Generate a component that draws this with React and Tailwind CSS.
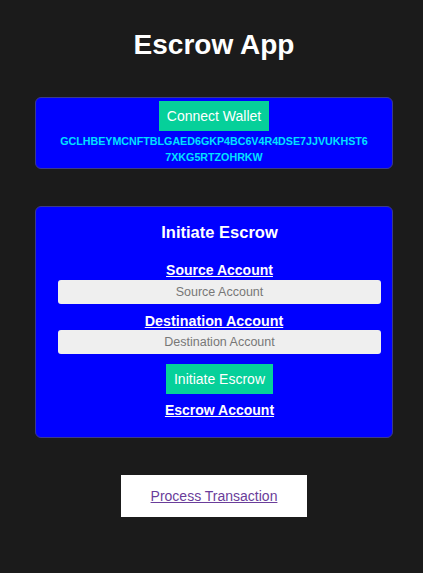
export default function App() {
  return (
    <div className="min-h-[573px] bg-[#1b1b1b] font-['Liberation_Sans',Arial,sans-serif] pt-[29px] pb-10">
      <div className="ml-[35px] w-[358px] flex flex-col">
        <h1 className="text-center text-white font-bold text-[28px] leading-[32px]">Escrow App</h1>

        <div className="mt-[36px] bg-[#0000ff] rounded-[6px] border border-[#3b3b8a] pt-[3px] pb-[3px] flex flex-col items-center">
          <button className="bg-[#06d09a] text-white text-[14px] h-[30px] px-[8px]">Connect Wallet</button>
          <p className="mt-[2px] text-[#00e0ff] font-bold text-[10.7px] leading-[16px] text-center px-[22px] break-all">
            GCLHBEYMCNFTBLGAED6GKP4BC6V4R4DSE7JJVUKHST67XKG5RTZOHRKW
          </p>
        </div>

        <div className="mt-[37px] bg-[#0000ff] rounded-[6px] border border-[#3b3b8a] pt-[15px] pb-[19px] pl-[22px] pr-[11px] flex flex-col items-center">
          <h2 className="text-white font-bold text-[16.5px] leading-[20px]">Initiate Escrow</h2>
          <label className="mt-[20px] text-white font-bold underline text-[14px] leading-[16px]">Source Account</label>
          <input
            placeholder="Source Account"
            className="mt-[2px] w-full h-[24px] rounded-[3px] bg-[#efefef] text-center text-[12.5px] placeholder:text-[#777]"
          />
          <label className="mt-[9px] mr-[11px] text-white font-bold underline text-[14.3px] leading-[16px]">Destination Account</label>
          <input
            placeholder="Destination Account"
            className="mt-[1px] w-full h-[24px] rounded-[3px] bg-[#efefef] text-center text-[12.5px] placeholder:text-[#777]"
          />
          <button className="mt-[10px] bg-[#06d09a] text-white text-[14px] h-[30px] px-[8px]">Initiate Escrow</button>
          <span className="mt-[8px] text-white font-bold underline text-[14px] leading-[16px]">Escrow Account</span>
        </div>

        <div className="mt-[37px] self-center w-[186px] h-[42px] bg-white flex items-center justify-center">
          <a href="#" className="text-[#6a3d9a] underline text-[14px]">Process Transaction</a>
        </div>
      </div>
    </div>
  );
}
